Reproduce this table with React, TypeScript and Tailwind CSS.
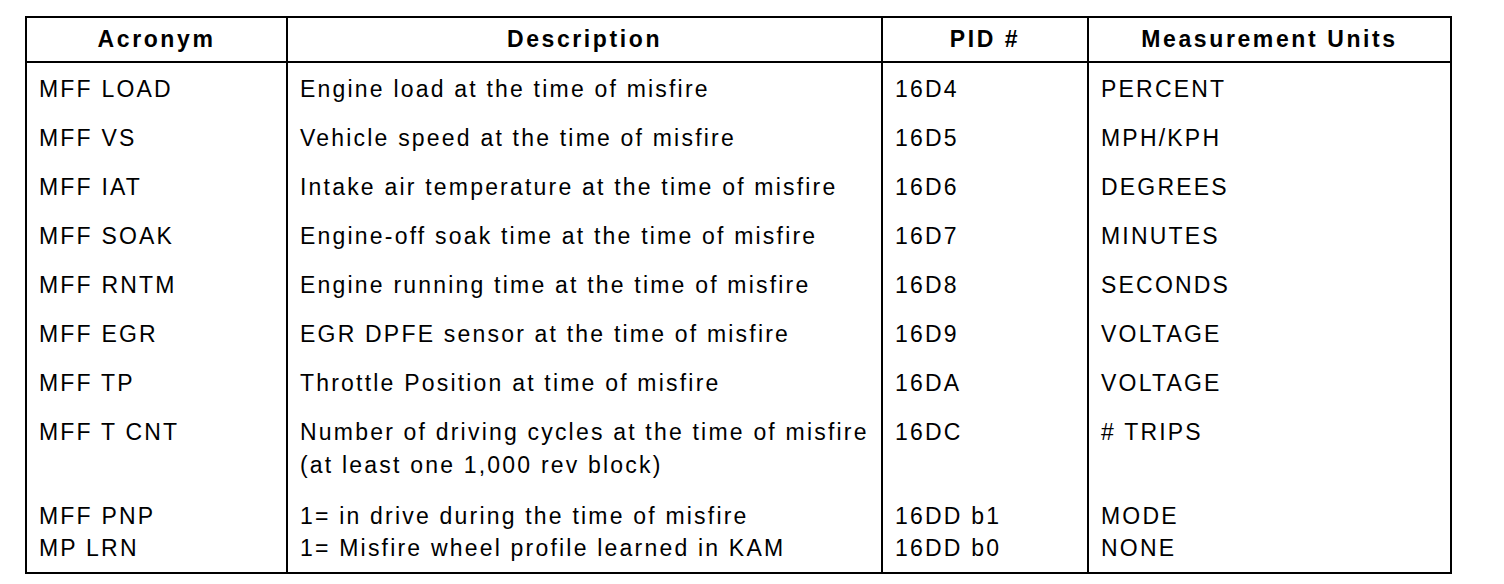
type Row = {
  acronym: string[]
  desc: string[]
  pid: string[]
  units: string[]
  pad: string
  leading: string
}

const rows: Row[] = [
  { acronym: ['MFF LOAD'], desc: ['Engine load at the time of misfire'], pid: ['16D4'], units: ['PERCENT'], pad: 'pt-[10px] pb-[16px]', leading: 'leading-[33px]' },
  { acronym: ['MFF VS'], desc: ['Vehicle speed at the time of misfire'], pid: ['16D5'], units: ['MPH/KPH'], pad: 'pb-[16px]', leading: 'leading-[33px]' },
  { acronym: ['MFF IAT'], desc: ['Intake air temperature at the time of misfire'], pid: ['16D6'], units: ['DEGREES'], pad: 'pb-[16px]', leading: 'leading-[33px]' },
  { acronym: ['MFF SOAK'], desc: ['Engine-off soak time at the time of misfire'], pid: ['16D7'], units: ['MINUTES'], pad: 'pb-[16px]', leading: 'leading-[33px]' },
  { acronym: ['MFF RNTM'], desc: ['Engine running time at the time of misfire'], pid: ['16D8'], units: ['SECONDS'], pad: 'pb-[16px]', leading: 'leading-[33px]' },
  { acronym: ['MFF EGR'], desc: ['EGR DPFE sensor at the time of misfire'], pid: ['16D9'], units: ['VOLTAGE'], pad: 'pb-[16px]', leading: 'leading-[33px]' },
  { acronym: ['MFF TP'], desc: ['Throttle Position at time of misfire'], pid: ['16DA'], units: ['VOLTAGE'], pad: 'pb-[16px]', leading: 'leading-[33px]' },
  {
    acronym: ['MFF T CNT'],
    desc: ['Number of driving cycles at the time of misfire', '(at least one 1,000 rev block)'],
    pid: ['16DC'],
    units: ['# TRIPS'],
    pad: 'pb-[18px]',
    leading: 'leading-[33px]',
  },
  {
    acronym: ['MFF PNP', 'MP LRN'],
    desc: ['1= in drive during the time of misfire', '1= Misfire wheel profile learned in KAM'],
    pid: ['16DD b1', '16DD b0'],
    units: ['MODE', 'NONE'],
    pad: 'pb-[8px]',
    leading: 'leading-[32px]',
  },
]

const headers = ['Acronym', 'Description', 'PID #', 'Measurement Units']

function Cell({ lines, className, leading }: { lines: string[]; className: string; leading: string }) {
  return (
    <div className={`px-3 ${className}`}>
      {lines.map((line) => (
        <div key={line} className={`whitespace-nowrap ${leading}`}>
          {line}
        </div>
      ))}
    </div>
  )
}

export default function App() {
  return (
    <div
      className="h-[584px] w-[1504px] bg-white pl-[25px] pt-[16px] text-black"
      style={{ fontFamily: '"Liberation Sans", Arial, sans-serif' }}
    >
      <div className="grid w-[1427px] grid-cols-[261px_595px_206px_361px] border-2 border-black text-[23px] tracking-[2.2px]">
        {headers.map((h, i) => (
          <div
            key={h}
            className={`flex h-[45px] items-center justify-center border-b-2 border-black font-bold tracking-[2.6px] ${
              i < 3 ? 'border-r-2' : ''
            }`}
          >
            {h}
          </div>
        ))}
        {rows.map((row) => (
          <div key={row.acronym[0]} className="contents">
            <Cell lines={row.acronym} leading={row.leading} className={`border-r-2 border-black ${row.pad}`} />
            <Cell lines={row.desc} leading={row.leading} className={`border-r-2 border-black ${row.pad}`} />
            <Cell lines={row.pid} leading={row.leading} className={`border-r-2 border-black ${row.pad}`} />
            <Cell lines={row.units} leading={row.leading} className={row.pad} />
          </div>
        ))}
      </div>
    </div>
  )
}
